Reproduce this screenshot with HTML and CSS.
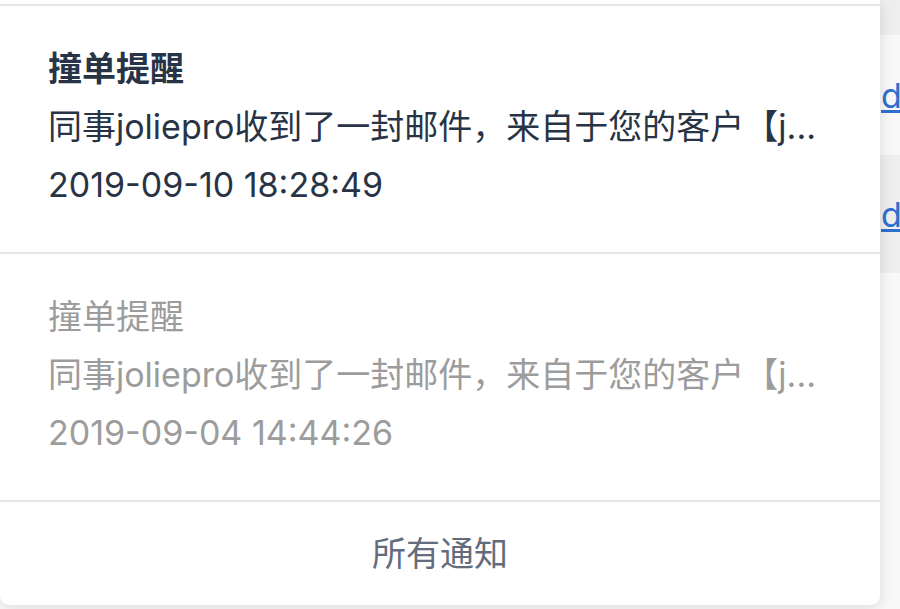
FILE: index.html
```html
<!DOCTYPE html>
<html lang="zh-CN">

<head>
  <meta charset="UTF-8" />
  <meta name="viewport" content="width=device-width, initial-scale=1.0" />
  <title>通知</title>
  <link rel="stylesheet" href="styles.css">
</head>

<body>
  <!-- 背景中的表格（被下拉框遮住大部分） -->
  <div class="page">
    <div class="row row-dark" style="height: 35px"></div>
    <div class="row row-light" style="height: 120px">
      <div class="cell-cover"></div>
      <a href="javascript:;" class="cell-link">detail</a>
    </div>
    <div class="row row-dark" style="height: 118px">
      <div class="cell-cover"></div>
      <a href="javascript:;" class="cell-link">detail</a>
    </div>
    <div class="row row-light" style="height: 340px"></div>
  </div>

  <!-- 通知下拉框 -->
  <div class="notice-panel">
    <div class="notice-list">
      <div class="notice unread">
        <div class="notice-title">撞单提醒</div>
        <div class="notice-text">同事joliepro收到了一封邮件，来自于您的客户【j...</div>
        <div class="notice-time">2019-09-10 18:28:49</div>
      </div>
      <div class="notice read">
        <div class="notice-title">撞单提醒</div>
        <div class="notice-text">同事joliepro收到了一封邮件，来自于您的客户【j...</div>
        <div class="notice-time">2019-09-04 14:44:26</div>
      </div>
    </div>
    <!-- 底部链接 -->
    <a href="javascript:;" class="notice-all">所有通知</a>
  </div>
</body>

</html>
```
FILE: styles.css
```css
/* 页面基础 */
body {
  margin: 0;
  height: 609px;
  overflow: hidden;
  position: relative;
  font-family: Inter, "Noto Sans CJK SC", sans-serif;
  background: #f7f7f7;
}

/* 背景表格行 */
.page {
  display: flex;
  flex-direction: column;
}

.row {
  display: flex;
  align-items: center;
}

.row-dark {
  background: #eeeeef;
}

.row-light {
  background: #f8f8f8;
}

.cell-cover {
  width: 881px;
  flex-shrink: 0;
}

.cell-link {
  font-size: 34px;
  color: #2f6fce;
  text-decoration: underline;
  white-space: nowrap;
}

/* 下拉框主体 */
.notice-panel {
  position: absolute;
  top: 0;
  left: 0;
  width: 880px;
  background: #fff;
  border-radius: 0 0 9px 9px;
  box-shadow: 0 2px 14px rgba(0, 0, 0, 0.12);
  overflow: hidden;
}

.notice-list {
  padding-top: 4px;
}

/* 单条通知 */
.notice {
  border-top: 2px solid #e7e7e8;
  padding: 34px 48px 38px;
  font-size: 34px;
  line-height: 58px;
}

.notice-title,
.notice-text,
.notice-time {
  white-space: nowrap;
  overflow: hidden;
  text-overflow: ellipsis;
}

.unread {
  color: #283445;
}

.unread .notice-title {
  font-weight: 600;
}

.read {
  color: #9c9c9c;
}

/* 所有通知 */
.notice-all {
  display: block;
  border-top: 2px solid #e7e7e8;
  height: 103px;
  line-height: 103px;
  text-align: center;
  font-size: 34px;
  color: #636c7c;
  text-decoration: none;
}
```
